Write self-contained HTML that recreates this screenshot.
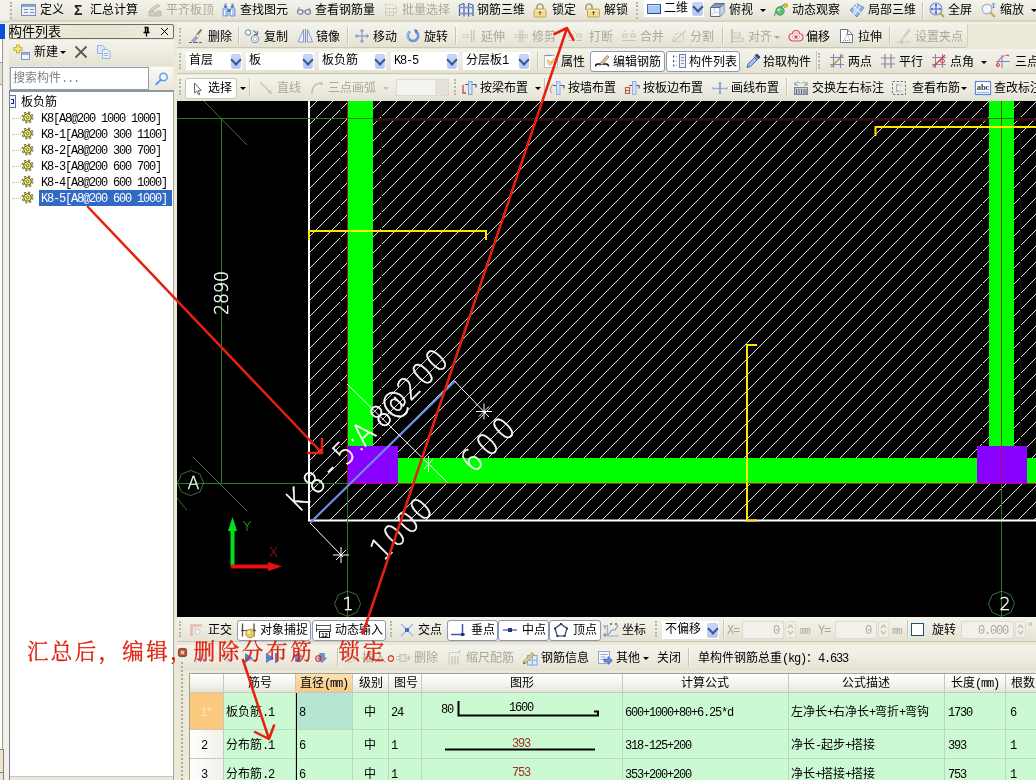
<!DOCTYPE html>
<html lang="zh-CN"><head><meta charset="utf-8"><title>构件列表 - 板负筋</title>
<style>
*{box-sizing:border-box;margin:0;padding:0}
html,body{width:1036px;height:780px;overflow:hidden}
body{position:relative;background:#ece9d8;font:12px/14px "Liberation Sans","Noto Sans CJK SC",sans-serif;color:#000}
#app{position:absolute;left:0;top:0;width:1036px;height:780px;will-change:transform}
.a{position:absolute}
.t{position:absolute;white-space:nowrap;height:14px;line-height:14px;font-size:12px}
.m{font-family:"Liberation Mono","Noto Sans CJK SC",monospace;letter-spacing:-1.2px}
.g{color:#aca899}
.tb{position:absolute;background:linear-gradient(#f4f3ec,#eeede2 45%,#e4e2d2)}
.btn{position:absolute;background:#fff;border:1px solid #8a99b5;border-radius:3px}
.sep{position:absolute;width:1px;background:#c8c5b5;box-shadow:1px 0 0 rgba(255,255,255,.55)}
.grip{position:absolute;width:3px;border-left:2px dotted #b8b5a5}
.cb{position:absolute;background:#fff;height:18px}
.arr{position:absolute;background:linear-gradient(#c8d6fb,#b4c8f6);border:1px solid #c2d0f4;border-radius:2px}
.arr:after{content:"";position:absolute;left:.6px;top:.7px;width:6px;height:6px;border-right:2px solid #3b5591;border-bottom:2px solid #3b5591;transform:rotate(45deg)}
.dd{position:absolute;width:0;height:0;border-left:3px solid transparent;border-right:3px solid transparent;border-top:3px solid #000}
.ic{position:absolute;width:16px;height:16px;overflow:visible}
.cell{position:absolute;background:#cbfad2;border-right:1px solid #bcd6c2;border-bottom:1px solid #bcd6c2}
.hd{position:absolute;background:linear-gradient(#fff,#f3f2ec 60%,#e6e4d8);border-right:1px solid #c9c7ba;border-bottom:1px solid #c9c7ba}
</style></head>
<body>
<div id="app">
<div class="a" style="left:0px;top:0px;width:10px;height:780px;background:#f1f1ea;border-right:1px solid #d6d3dc"></div>
<div class="a" style="left:0px;top:20px;width:9px;height:3px;background:linear-gradient(#e4e2da,#d4d2c8)"></div>
<div class="a" style="left:0px;top:39px;width:3px;height:710px;background:#fff;border-right:1px solid #9c9a90"></div>
<div class="a" style="left:0px;top:24px;width:5px;height:15px;background:#0a4fd8"></div>
<div class="a" style="left:0px;top:62px;width:3px;height:23px;background:#e2e0d6;border:1px solid #9c9a90;border-left:0"></div>
<div class="a" style="left:0px;top:749px;width:4px;height:31px;background:#ece4d0;border-right:1px solid #85837a;border-top:1px solid #85837a"></div>
<div class="a" style="left:0px;top:772px;width:4px;height:1px;background:#85837a"></div>
<div class="tb" style="left:9px;top:0px;width:1027px;height:20px;"></div>
<div class="a" style="left:9px;top:19px;width:1027px;height:3px;background:linear-gradient(#e2dfd0,#d3d0c0)"></div>
<div class="a" style="left:9px;top:22px;width:1027px;height:2px;background:#f3f2ea"></div>
<div class="grip" style="left:10px;top:2px;width:3px;height:17px;"></div>
<svg class="ic" style="left:20px;top:2px;width:16px;height:16px;" viewBox="0 0 16 16"><rect x="1.5" y="2.5" width="14" height="11" fill="#e9eef8" stroke="#7b8fb8"/><rect x="2" y="3" width="13" height="2" fill="#8ea4d2"/><path d="M4 7.5h4M4 10.5h4M10 7.5h4M10 10.5h4" stroke="#7b8fb8"/></svg>
<div class="t " style="left:40px;top:3px;">定义</div>
<div class="t " style="left:74px;top:2px;font:bold 14px 'Liberation Sans',sans-serif;color:#222">Σ</div>
<div class="t " style="left:90px;top:3px;">汇总计算</div>
<svg class="ic" style="left:147px;top:2px;width:16px;height:16px;" viewBox="0 0 16 16"><path d="M3 7l8-5 2 2-8 5z" fill="#d4d2c6" stroke="#bdbaab" stroke-width=".8"/><path d="M2 9h5v2h3v-2h4v5h-12z" fill="#cfcdc0" stroke="#b5b2a3" stroke-width=".8"/></svg>
<div class="t g" style="left:166px;top:3px;">平齐板顶</div>
<svg class="ic" style="left:221px;top:2px;width:16px;height:16px;" viewBox="0 0 16 16"><path d="M3 4h3v2h-3zM10 4h3v2h-3z" fill="#4f6fb5"/><path d="M2 7c0-1 1-1.500 2.500-1.500s2.500.5 2.500 1.500v7h-5zM9 7c0-1 1-1.500 2.500-1.500s2.500.5 2.500 1.500v7h-5z" fill="#a9c5f2" stroke="#6f8fd0" stroke-width=".8"/><path d="M3.500 8v5M10.500 8v5" stroke="#fff" stroke-width="1.200"/><rect x="6.500" y="7" width="3" height="3" fill="#5a78b8"/><path d="M3.500 1.500h2v2.500h-2zM10.500 1.500h2v2.500h-2z" fill="#6f8fd0"/></svg>
<div class="t " style="left:240px;top:3px;">查找图元</div>
<svg class="ic" style="left:296px;top:2px;width:16px;height:16px;" viewBox="0 0 16 16"><ellipse cx="4.200" cy="10" rx="2.700" ry="2.300" fill="none" stroke="#7d88a4" stroke-width="1.300"/><ellipse cx="11.800" cy="10" rx="2.700" ry="2.300" fill="none" stroke="#7d88a4" stroke-width="1.300"/><path d="M1.500 9l2-4M14.500 9l-1.500-3M7 9.500q1-1 2 0" stroke="#7d88a4" fill="none"/></svg>
<div class="t " style="left:315px;top:3px;">查看钢筋量</div>
<svg class="ic" style="left:383px;top:2px;width:16px;height:16px;" viewBox="0 0 16 16"><path d="M2.500 2v12M2.500 2.500h8M2.500 6.500h11M2.500 10.500h11M2.500 13.500h8M6.500 6v8M10.500 6v8" stroke="#c9c6b8" fill="none" stroke-dasharray="2 1"/><path d="M12 3l2 5-2 5" fill="none" stroke="#cfccc0"/></svg>
<div class="t g" style="left:402px;top:3px;">批量选择</div>
<svg class="ic" style="left:458px;top:2px;width:16px;height:16px;" viewBox="0 0 16 16"><path d="M1.500 3v11M6 1.500v13M10.500 1.500v13M15 3v11" stroke="#3e5aa8" stroke-width="1.200"/><path d="M1 5.500h14.500M1 11.500h14.500" stroke="#6f8fd8" stroke-width="1.300"/><path d="M1.500 3l4.500-1.500M10.500 1.500l4.500 1.500" stroke="#3e5aa8"/></svg>
<div class="t " style="left:477px;top:3px;">钢筋三维</div>
<svg class="ic" style="left:532px;top:2px;width:16px;height:16px;" viewBox="0 0 16 16"><path d="M5 7.500v-2.500a3 3 0 0 1 6 0v2.500" fill="none" stroke="#a8a08a" stroke-width="1.700"/><rect x="2" y="7" width="12" height="8" rx="1.500" fill="#f3dc92" stroke="#c2a64c"/><path d="M3 8.500h10" stroke="#fbf0c4"/><path d="M8 9.500v3.500M6.800 11l1.200-1.500 1.200 1.500" stroke="#6a5a2a" stroke-width="1" fill="none"/></svg>
<div class="t " style="left:552px;top:3px;">锁定</div>
<svg class="ic" style="left:584px;top:2px;width:16px;height:16px;" viewBox="0 0 16 16"><path d="M2 8v-3a3 3 0 0 1 6 0v2.500" fill="none" stroke="#a8a08a" stroke-width="1.700"/><rect x="3.500" y="7" width="12" height="8" rx="1.500" fill="#f3dc92" stroke="#c2a64c"/><path d="M4.500 8.500h10" stroke="#fbf0c4"/><path d="M9.500 9.500v3.500M8.300 11l1.200-1.500 1.200 1.500" stroke="#6a5a2a" stroke-width="1" fill="none"/></svg>
<div class="t " style="left:604px;top:3px;">解锁</div>
<div class="grip" style="left:636px;top:2px;width:3px;height:17px;"></div>
<div class="cb" style="left:643.5px;top:0px;width:60px;height:16.5px;"></div>
<svg class="ic" style="left:646px;top:0px;width:16px;height:16px;" viewBox="0 0 16 16"><rect x="1.500" y="4.500" width="13" height="9" fill="#a9c4f6" stroke="#4a68b0"/><path d="M2 13.500h13M14.500 5v8.500" stroke="#2a4590"/><path d="M2.500 5.500h11" stroke="#cfe0fc"/></svg>
<div class="t " style="left:664px;top:1px;">二维</div>
<div class="arr" style="left:692.3px;top:1.5px;width:10.5px;height:14px;"></div>
<svg class="ic" style="left:709px;top:2px;width:16px;height:16px;" viewBox="0 0 16 16"><path d="M1.500 5.500l4-4h9.500v9l-4 4h-9.500z" fill="#f4f8fd" stroke="#5a6a88"/><path d="M1.500 5.500l4-4h9.500l-4 4z" fill="#7f9cc4" stroke="#5a6a88"/><path d="M11 5.500v9M11 5.500l4-4" fill="none" stroke="#5a6a88"/><path d="M11.500 6l3-3v7.500l-3 3z" fill="#c4d6ee"/><path d="M5.500 6v4.500M5.500 10.500l-3.500 3M5.500 10.500h5" stroke="#b8c8e0" stroke-width=".8" fill="none"/></svg>
<div class="t " style="left:729px;top:3px;">俯视</div>
<div class="dd" style="left:760px;top:9px;border-top-color:#000"></div>
<svg class="ic" style="left:773px;top:2px;width:16px;height:16px;" viewBox="0 0 16 16"><path d="M1.500 14c1-7 6-11 13-11" fill="none" stroke="#7f9ad0" stroke-width="1.400"/><circle cx="7" cy="9" r="4.200" fill="#5fc070" stroke="#2f8a45" stroke-width=".8"/><circle cx="5.800" cy="7.800" r="1.400" fill="#c8f0cc"/><circle cx="12.500" cy="3.500" r="2" fill="#f0c040" stroke="#a88420" stroke-width=".7"/></svg>
<div class="t " style="left:792px;top:3px;">动态观察</div>
<svg class="ic" style="left:849px;top:2px;width:16px;height:16px;" viewBox="0 0 16 16"><path d="M1 8l7-6.500 7 4-7 9.500z" fill="#8fb6ea" stroke="#5f80c0" stroke-width=".8"/><path d="M4.500 4.800l7 6M8 1.500l-3.500 10M11.500 3.500l-6 9" stroke="#eaf2fc" stroke-width="1.200" fill="none"/></svg>
<div class="t " style="left:868px;top:3px;">局部三维</div>
<div class="sep" style="left:922px;top:2px;width:1px;height:17px;"></div>
<svg class="ic" style="left:929px;top:2px;width:16px;height:16px;" viewBox="0 0 16 16"><circle cx="7" cy="7" r="6" fill="#e6eefb" stroke="#7f97c8" stroke-width="1.200"/><path d="M7 2.500v9M2.500 7h9" stroke="#4a6ab8" stroke-width="1.200"/><path d="M7 1.500l-1.800 2.300h3.600zM7 12.500l-1.800-2.300h3.600zM1.500 7l2.300-1.800v3.600zM12.500 7l-2.300-1.800v3.600z" fill="#4a6ab8"/><path d="M11.500 11.500l3.500 3.500" stroke="#c8a048" stroke-width="2"/></svg>
<div class="t " style="left:948px;top:3px;">全屏</div>
<svg class="ic" style="left:981px;top:2px;width:16px;height:16px;" viewBox="0 0 16 16"><circle cx="6" cy="7" r="4.800" fill="#f2f7fd" stroke="#a9b6cc" stroke-width="1.500"/><path d="M9.500 10.500l4.500 4.500" stroke="#d0a850" stroke-width="2.200"/><path d="M12.500 1v5M11 2.500l1.500-1.500 1.500 1.500M11 4.500l1.500 1.500 1.500-1.500" stroke="#5f80c0" fill="none" stroke-width=".9"/></svg>
<div class="t " style="left:1000px;top:3px;">缩放</div>
<div class="dd" style="left:1031px;top:9px;border-top-color:#000"></div>
<div class="a" style="left:177px;top:24px;width:859px;height:77px;background:#ece9d8"></div>
<div class="tb" style="left:177px;top:23px;width:791px;height:25px;border-radius:0 3px 3px 0;border-bottom:1px solid #cbc8b8;border-right:1px solid #d5d2c2"></div>
<div class="grip" style="left:179px;top:28px;width:3px;height:16px;"></div>
<svg class="ic" style="left:188px;top:28px;width:16px;height:16px;" viewBox="0 0 16 16"><path d="M13.500 1.500l-5 6" stroke="#8a8458" stroke-width="2"/><path d="M9.500 6l-2 2.500 1.800 1.500 2-2.500z" fill="#f4f4f4" stroke="#999" stroke-width=".6"/><path d="M7.500 8.500l-4 4.500 3 .5 3-3.500z" fill="#b79ad8" stroke="#8a6ab0" stroke-width=".6"/><path d="M1 14.500h3M5 14.500h5M11 14.500h3" stroke="#666" stroke-width="1.200"/></svg>
<div class="t " style="left:208px;top:30px;">删除</div>
<div class="sep" style="left:238px;top:27px;width:1px;height:18px;"></div>
<svg class="ic" style="left:244px;top:28px;width:16px;height:16px;" viewBox="0 0 16 16"><circle cx="4" cy="4.500" r="2.600" fill="#fff" stroke="#8d9bb8" stroke-width="1.200"/><circle cx="11" cy="11" r="3.600" fill="#fff" stroke="#8d9bb8" stroke-width="1.200"/><circle cx="11" cy="11" r="1.800" fill="none" stroke="#b5c0d6"/><path d="M9.500 2.500l4 4M13.500 3v3.500h-3.500" fill="none" stroke="#6d7890" stroke-width="1.100"/></svg>
<div class="t " style="left:264px;top:30px;">复制</div>
<svg class="ic" style="left:297px;top:28px;width:16px;height:16px;" viewBox="0 0 16 16"><path d="M6.500 1.500v12.500h-5.500z" fill="#e8eefa" stroke="#8aa0cc"/><path d="M10.500 1.500v12.500h5z" fill="#e8eefa" stroke="#8aa0cc"/><path d="M8.500 1v14" stroke="#7f94c0" stroke-width="1.200"/></svg>
<div class="t " style="left:316px;top:30px;">镜像</div>
<div class="sep" style="left:347px;top:27px;width:1px;height:18px;"></div>
<svg class="ic" style="left:354px;top:28px;width:16px;height:16px;" viewBox="0 0 16 16"><path d="M8 2v12M2 8h12" stroke="#8fa4cc" stroke-width="1.300"/><path d="M8 .8l-2.200 2.700h4.400zM8 15.200l-2.200-2.700h4.400zM.8 8l2.700-2.200v4.400zM15.200 8l-2.700-2.200v4.400z" fill="#7f98c8"/></svg>
<div class="t " style="left:373px;top:30px;">移动</div>
<svg class="ic" style="left:405px;top:28px;width:16px;height:16px;" viewBox="0 0 16 16"><path d="M5 3.500a5.200 5.200 0 1 0 6 0" fill="none" stroke="#6f93e0" stroke-width="2.600"/><path d="M4 4.500a5.200 5.200 0 0 0 0 7" fill="none" stroke="#a9c2f2" stroke-width="1.200"/><path d="M9 1l4 1.500-2.500 3z" fill="#4f74c8"/></svg>
<div class="t " style="left:424px;top:30px;">旋转</div>
<div class="sep" style="left:455px;top:27px;width:1px;height:18px;"></div>
<svg class="ic" style="left:461px;top:28px;width:16px;height:16px;" viewBox="0 0 16 16"><path d="M1 7h3M5 7h3M1 9.500h3M5 9.500h3" stroke="#c9c6b8" stroke-width="1.200"/><path d="M10.500 2v12M13 2v12" stroke="#c9c6b8" stroke-width="1.300"/></svg>
<div class="t g" style="left:481px;top:30px;">延伸</div>
<svg class="ic" style="left:513px;top:28px;width:16px;height:16px;" viewBox="0 0 16 16"><path d="M1 7h14M1 9.500h14" stroke="#c9c6b8" stroke-width="1.100"/><path d="M7 2v12M9.500 2v12" stroke="#c9c6b8" stroke-width="1.300"/></svg>
<div class="t g" style="left:532px;top:30px;">修剪</div>
<svg class="ic" style="left:567px;top:28px;width:16px;height:16px;" viewBox="0 0 16 16"><path d="M2 6h4M10 6h4M2 6v3h4v-3M10 6v3h4v-3M1 12.500h5.500M9.500 12.500h5.500" stroke="#c9c6b8" fill="none" stroke-width="1.200"/><path d="M7 3l2 2" stroke="#c9c6b8"/></svg>
<div class="t g" style="left:589px;top:30px;">打断</div>
<svg class="ic" style="left:621px;top:28px;width:16px;height:16px;" viewBox="0 0 16 16"><path d="M2 6h4M10 6h4M2 6v3h4v-3M10 6v3h4v-3M1 12.500h14" stroke="#c9c6b8" fill="none" stroke-width="1.200"/><path d="M3 3h2M11 3h2" stroke="#c9c6b8"/></svg>
<div class="t g" style="left:640px;top:30px;">合并</div>
<svg class="ic" style="left:671px;top:28px;width:16px;height:16px;" viewBox="0 0 16 16"><path d="M1.500 13.500h11v-8h-8z" fill="none" stroke="#c9c6b8" stroke-width="1.100" stroke-dasharray="2 1"/><path d="M2 14l11-10" stroke="#c9c6b8" stroke-width="1.200"/><path d="M11 6l3.500-4 1 1-3.500 4z" fill="#d8d5c8"/></svg>
<div class="t g" style="left:690px;top:30px;">分割</div>
<div class="sep" style="left:722px;top:27px;width:1px;height:18px;"></div>
<svg class="ic" style="left:729px;top:28px;width:16px;height:16px;" viewBox="0 0 16 16"><path d="M3 1v14" stroke="#bfbcae" stroke-width="1.600"/><path d="M3 5h8v3h-8M3 10h11v3.500h-11" stroke="#c9c6b8" fill="none" stroke-width="1.200"/></svg>
<div class="t g" style="left:748px;top:30px;">对齐</div>
<div class="dd" style="left:774px;top:36px;border-top-color:#aca899"></div>
<svg class="ic" style="left:788px;top:28px;width:16px;height:16px;" viewBox="0 0 16 16"><path d="M8 2.500c2.200 0 3.500 1.500 3.500 3 2 .3 3.500 1.700 3.500 3.700 0 2.300-2 3.800-4.500 3.800h-5c-2.500 0-4.500-1.500-4.500-3.800 0-2 1.500-3.400 3.500-3.700 0-1.500 1.300-3 3.500-3z" fill="#fbe4e6" stroke="#c85060" stroke-width="1.100"/><path d="M8 5c1.200 0 1.800.9 1.800 1.800 1 .2 1.800.9 1.800 2 0 1.200-1 2-2.200 2h-2.800c-1.200 0-2.200-.8-2.200-2 0-1.100.8-1.800 1.800-2 0-.9.600-1.800 1.800-1.800z" fill="#fff" stroke="#d88a94" stroke-width=".8"/><rect x="6.500" y="7.500" width="3" height="2.500" fill="#d83a4a"/></svg>
<div class="t " style="left:806px;top:30px;">偏移</div>
<svg class="ic" style="left:839px;top:28px;width:16px;height:16px;" viewBox="0 0 16 16"><path d="M1.500 1.500h7l5 5v8h-12z" fill="#fff" stroke="#6a7590"/><path d="M8.500 1.500v5h5" fill="none" stroke="#6a7590"/><path d="M4 12.500h8M8 6l-3 6.500M8 6l3 6.500" stroke="#8a94aa" stroke-dasharray="1 1" fill="none"/></svg>
<div class="t " style="left:858px;top:30px;">拉伸</div>
<div class="sep" style="left:889px;top:27px;width:1px;height:18px;"></div>
<svg class="ic" style="left:896px;top:28px;width:16px;height:16px;" viewBox="0 0 16 16"><path d="M13.500 1.500l-6 8" stroke="#cfccbf" stroke-width="2.200"/><path d="M7.500 9.500l-2 3" stroke="#d8d5c8" stroke-width="2"/><path d="M1 14h4M6 14h3M10 14h4" stroke="#c5c2b4" stroke-width="1.200"/><rect x="4" y="12.500" width="3" height="3" fill="#c9c6b8"/></svg>
<div class="t g" style="left:915px;top:30px;">设置夹点</div>
<div class="tb" style="left:177px;top:49px;width:859px;height:25px;border-bottom:1px solid #cbc8b8"></div>
<div class="grip" style="left:179px;top:53px;width:3px;height:16px;"></div>
<div class="cb" style="left:186px;top:52px;width:56px;height:18px;"></div>
<div class="arr" style="left:230.5px;top:54px;width:10.5px;height:14.5px;"></div>
<div class="t " style="left:189px;top:53px;">首层</div>
<div class="cb" style="left:246px;top:52px;width:68px;height:18px;"></div>
<div class="arr" style="left:302.5px;top:54px;width:10.5px;height:14.5px;"></div>
<div class="t " style="left:249px;top:53px;">板</div>
<div class="cb" style="left:319px;top:52px;width:67px;height:18px;"></div>
<div class="arr" style="left:374.5px;top:54px;width:10.5px;height:14.5px;"></div>
<div class="t " style="left:322px;top:53px;">板负筋</div>
<div class="cb" style="left:391px;top:52px;width:67px;height:18px;"></div>
<div class="arr" style="left:446.5px;top:54px;width:10.5px;height:14.5px;"></div>
<div class="t " style="left:394px;top:53px;"><span class="m">K8-5</span></div>
<div class="cb" style="left:463px;top:52px;width:67px;height:18px;"></div>
<div class="arr" style="left:518.5px;top:54px;width:10.5px;height:14.5px;"></div>
<div class="t " style="left:466px;top:53px;">分层板<span class="m">1</span></div>
<div class="sep" style="left:537px;top:52px;width:1px;height:18px;"></div>
<svg class="ic" style="left:543px;top:53px;width:16px;height:16px;" viewBox="0 0 16 16"><path d="M1.500 2.500h10l3 3v9h-13z" fill="#fff" stroke="#b9bfcc"/><path d="M1.500 2.500h8" stroke="#8a8f9c" stroke-width="1.200"/><path d="M4 7l3.500 3 5-5" fill="none" stroke="#e6c860" stroke-width="2.400"/><path d="M4 10l3 2.500 4-4" fill="none" stroke="#c8b070" stroke-width="1"/></svg>
<div class="t " style="left:561px;top:55px;">属性</div>
<div class="btn" style="left:590px;top:51px;width:75px;height:21px;"></div>
<svg class="ic" style="left:594px;top:53px;width:16px;height:16px;" viewBox="0 0 16 16"><path d="M1.500 13.500c0-2 1-2.500 2.500-2.500h8c1.500 0 2.500.5 2.500 2.500" stroke="#111" fill="none" stroke-width="1.300"/><path d="M6 10.500l7-8 2 1.500-7 8z" fill="#d9c79a" stroke="#8f7d50" stroke-width=".7"/><path d="M6 10.500l-.5 2 2.300-.7z" fill="#444"/></svg>
<div class="t " style="left:613px;top:55px;">编辑钢筋</div>
<div class="btn" style="left:666px;top:51px;width:74px;height:21px;"></div>
<svg class="ic" style="left:671px;top:53px;width:16px;height:16px;" viewBox="0 0 16 16"><path d="M2 3.500h2M2 8h2M2 12.500h2" stroke="#3b4a78" stroke-width="1.800" stroke-dasharray="1.200 .8"/><path d="M5 3.500h2M5 8h2M5 12.500h2" stroke="#8a98b8" stroke-dasharray="1 1"/><rect x="8.500" y="1.500" width="6" height="13" fill="#eef3fb" stroke="#6f80a8"/><path d="M10 4.500h3M10 7.500h3M10 10.500h3" stroke="#8a98b8"/></svg>
<div class="t " style="left:689px;top:55px;">构件列表</div>
<svg class="ic" style="left:745px;top:53px;width:16px;height:16px;" viewBox="0 0 16 16"><path d="M2 14.500l1-3.500 6.500-6.500 2.500 2.500-6.500 6.500z" fill="#9cc0f0" stroke="#3f5f9a" stroke-width=".9"/><path d="M9 3.500l3.500 3.500M10 2.500l2-1.500 3 3-1.500 2z" fill="#34508c" stroke="#34508c"/></svg>
<div class="t " style="left:763px;top:55px;">拾取构件</div>
<div class="sep" style="left:816px;top:51px;width:1px;height:21px;"></div>
<div class="grip" style="left:818px;top:53px;width:3px;height:16px;"></div>
<svg class="ic" style="left:829px;top:53px;width:16px;height:16px;" viewBox="0 0 16 16"><path d="M1 4.500h14M1 11.500h14" stroke="#7d86c8" stroke-width="1.100"/><path d="M4.500 1v14M11.500 1v14" stroke="#9a7aa8" stroke-width="1.100"/><path d="M2 14l12-12" stroke="#9a9458" stroke-width="1.300"/></svg>
<div class="t " style="left:848px;top:55px;">两点</div>
<svg class="ic" style="left:880px;top:53px;width:16px;height:16px;" viewBox="0 0 16 16"><path d="M1 5h14M1 11h14" stroke="#7d86c8" stroke-width="1.200"/><path d="M5 1v14M11 1v14" stroke="#a87a8a" stroke-width="1.200"/></svg>
<div class="t " style="left:899px;top:55px;">平行</div>
<svg class="ic" style="left:931px;top:53px;width:16px;height:16px;" viewBox="0 0 16 16"><path d="M1 4.500h14M1 11.500h14" stroke="#7d86c8" stroke-width="1.100"/><path d="M4.500 1v14M11.500 1v14" stroke="#b07a8a" stroke-width="1.100"/><path d="M2 14l12-12" stroke="#d84050" stroke-width="1.200"/><circle cx="11.500" cy="8" r="2" fill="none" stroke="#d84050"/></svg>
<div class="t " style="left:950px;top:55px;">点角</div>
<div class="dd" style="left:981px;top:61px;border-top-color:#000"></div>
<svg class="ic" style="left:995px;top:53px;width:16px;height:16px;" viewBox="0 0 16 16"><path d="M2 14c0-7 5-12 12-12" fill="none" stroke="#e07080" stroke-width="1.200"/><path d="M7 2v13M1 8.500h14" stroke="#7d86c8" stroke-width="1.100"/><circle cx="3" cy="12" r="1.500" fill="none" stroke="#d84050"/><path d="M12 2l2 1" stroke="#d84050"/></svg>
<div class="t " style="left:1015px;top:55px;">三点</div>
<div class="tb" style="left:177px;top:75px;width:859px;height:26px;"></div>
<div class="grip" style="left:179px;top:79px;width:3px;height:16px;"></div>
<div class="btn" style="left:185px;top:77.5px;width:52px;height:21.5px;border-color:#c9c7ba"></div>
<svg class="ic" style="left:190px;top:80px;width:16px;height:16px;" viewBox="0 0 16 16"><path d="M4.500 3v10l2.300-2 1.700 3.800 1.400-.6-1.700-3.800h3z" fill="#fff" stroke="#555" stroke-width=".9"/></svg>
<div class="t " style="left:208px;top:81px;">选择</div>
<div class="dd" style="left:240px;top:87px;border-top-color:#000"></div>
<div class="sep" style="left:249px;top:78px;width:1px;height:18px;"></div>
<svg class="ic" style="left:258px;top:80px;width:16px;height:16px;" viewBox="0 0 16 16"><path d="M2 2l11 11" stroke="#c6c3b4" stroke-width="1.300"/><path d="M14 14l-4.500-1.200 3.300-3.300z" fill="#c6c3b4"/></svg>
<div class="t g" style="left:277px;top:81px;">直线</div>
<svg class="ic" style="left:309px;top:80px;width:16px;height:16px;" viewBox="0 0 16 16"><path d="M3 14c0-7 3-11 10-11" fill="none" stroke="#c6c3b4" stroke-width="1.600"/><circle cx="12.500" cy="3.500" r="1.500" fill="#c6c3b4"/></svg>
<div class="t g" style="left:328px;top:81px;">三点画弧</div>
<div class="dd" style="left:383px;top:87px;border-top-color:#c6c3b4"></div>
<div class="a" style="left:396px;top:79px;width:53px;height:17px;background:#f4f3ee;border:1px solid #dddbd0"></div>
<div class="a" style="left:435px;top:80px;width:13px;height:15px;background:#e4e2d8;border-radius:2px"></div>
<div class="grip" style="left:454px;top:79px;width:3px;height:16px;"></div>
<svg class="ic" style="left:461px;top:80px;width:16px;height:16px;" viewBox="0 0 16 16"><path d="M2 5v8h3" fill="none" stroke="#b85048" stroke-width="1.300"/><path d="M4 4.500h11v3" fill="none" stroke="#4a5a88" stroke-width="1.200"/><rect x="7.500" y="1.500" width="3.500" height="13" fill="#d2e2f8" stroke="#7fa0d8"/></svg>
<div class="t " style="left:480px;top:81px;">按梁布置</div>
<div class="dd" style="left:535px;top:87px;border-top-color:#000"></div>
<div class="sep" style="left:544px;top:78px;width:1px;height:18px;"></div>
<svg class="ic" style="left:549px;top:80px;width:16px;height:16px;" viewBox="0 0 16 16"><path d="M3 13.500c-2.500-3-2-7 1-9" stroke="#a9a0a8" fill="none" stroke-width="1.100"/><path d="M4 5.500h11v3" fill="none" stroke="#4a5a88" stroke-width="1.200"/><rect x="7.500" y="1.500" width="3.500" height="13" fill="#d2e2f8" stroke="#8fb0e0"/></svg>
<div class="t " style="left:568px;top:81px;">按墙布置</div>
<svg class="ic" style="left:624px;top:80px;width:16px;height:16px;" viewBox="0 0 16 16"><path d="M1.500 7.500h4v6h-4zM1.500 10.500h4" fill="none" stroke="#c05a48" stroke-width="1.200"/><path d="M5 5.500h10v3" fill="none" stroke="#4a5a88" stroke-width="1.200"/><rect x="8.500" y="1.500" width="3.500" height="13" fill="#d2e2f8" stroke="#8fb0e0"/></svg>
<div class="t " style="left:643px;top:81px;">按板边布置</div>
<svg class="ic" style="left:712px;top:80px;width:16px;height:16px;" viewBox="0 0 16 16"><path d="M1 8.500h14" stroke="#8fb0e0" stroke-width="1.300"/><path d="M8 2v12" stroke="#6a80b0" stroke-width="1.200"/><path d="M1 7l-0 3M15 7v3M6 3.500h4M6 13.500h4" stroke="#8fb0e0"/></svg>
<div class="t " style="left:731px;top:81px;">画线布置</div>
<div class="sep" style="left:786px;top:78px;width:1px;height:18px;"></div>
<svg class="ic" style="left:793px;top:80px;width:16px;height:16px;" viewBox="0 0 16 16"><rect x="1.500" y="7.500" width="13" height="7" fill="#c9ccd6" stroke="#7d8494"/><path d="M3.500 9v5M6 9v5M8.500 9v5M11 9v5M13 9v5" stroke="#5f6678"/><path d="M2 4.500c2-3 4-3 5-1M14 4.500c-2-3-4-3-5-1" fill="none" stroke="#8a90a0"/><path d="M2 2v3h3M14 2v3h-3" fill="none" stroke="#8a90a0"/></svg>
<div class="t " style="left:812px;top:81px;">交换左右标注</div>
<svg class="ic" style="left:891px;top:80px;width:16px;height:16px;" viewBox="0 0 16 16"><rect x="1.500" y="1.500" width="13" height="13" fill="none" stroke="#777c8a" stroke-dasharray="2.500 1.500"/><path d="M5.500 4v8M5.500 5h5M5.500 11h5" stroke="#aab" fill="none"/></svg>
<div class="t " style="left:912px;top:81px;">查看布筋</div>
<div class="dd" style="left:961px;top:87px;border-top-color:#000"></div>
<svg class="ic" style="left:975px;top:80px;width:16px;height:16px;" viewBox="0 0 16 16"><rect x=".5" y="1.500" width="15" height="13" fill="#fff" stroke="#5f86d0" stroke-width="1.200"/><path d="M2 12.500h12" stroke="#9cc0f0" stroke-width="1.500"/><text x="8" y="10" font-size="8.500" text-anchor="middle" font-family="Liberation Serif,serif" font-weight="bold" fill="#334">abc</text></svg>
<div class="t " style="left:994px;top:81px;">查改标注</div>
<div class="a" style="left:10px;top:24px;width:167px;height:756px;background:#ece9d8"></div>
<div class="a" style="left:9px;top:24px;width:165px;height:15px;background:linear-gradient(100deg,#ecebdc,#e6e4d2 60%,#efeee2);border:1px solid #6f6d60;border-radius:2px"></div>
<div class="t " style="left:9px;top:24.5px;font-size:13px">构件列表</div>
<svg class="a" style="left:140px;top:25px;width:32px;height:13px" viewBox="0 0 32 13"><path d="M4.500 2.500h4M5.500 2.500v5M7.500 2.500v5M8 3v4.500M3.500 7.500h6M6.500 7.500v4" stroke="#000" fill="none" stroke-width="1.300"/><path d="M21 3l7 7M28 3l-7 7" stroke="#000"/></svg>
<div class="tb" style="left:9px;top:40px;width:165px;height:26px;"></div>
<svg class="ic" style="left:13px;top:44px;width:16px;height:16px;" viewBox="0 0 16 16"><path d="M3.500 1h3v2.500h2.500v3h-2.500v2.500h-3v-2.500h-2.500v-3h2.500z" fill="#f6e67e" stroke="#c2a838" stroke-width=".9"/><rect x="8.500" y="8.500" width="8" height="7" fill="#f2f6fd" stroke="#7f94c8"/><rect x="9" y="9" width="7" height="2" fill="#9ab0e0"/></svg>
<div class="t " style="left:34px;top:45px;">新建</div>
<div class="dd" style="left:60px;top:51px;border-top-color:#000"></div>
<svg class="ic" style="left:73px;top:44px;width:16px;height:16px;" viewBox="0 0 16 16"><path d="M2.500 2.500l11 11M13.500 2.500l-11 11" stroke="#5a5a5a" stroke-width="1.800"/></svg>
<svg class="ic" style="left:96px;top:44px;width:16px;height:16px;" viewBox="0 0 16 16"><path d="M1.500 1.500h5l2 2v6h-7z" fill="#dce8fb" stroke="#9ab4e0"/><path d="M6.500 5.500h5l2.500 2.500v6.500h-7.500z" fill="#e8f0fd" stroke="#9ab4e0"/><path d="M8 9.500h4M8 11.500h4" stroke="#9ab4e0"/></svg>
<div class="a" style="left:10px;top:67px;width:139px;height:23px;background:#fff;border:1px solid #8e9cb0"></div>
<div class="t " style="left:13px;top:71px;color:#808080">搜索构件<span class="m">...</span></div>
<div class="a" style="left:149px;top:67px;width:24px;height:24px;background:linear-gradient(#fafaf6,#e9e7da)"></div>
<svg class="ic" style="left:153px;top:70px;width:16px;height:16px;" viewBox="0 0 16 16"><circle cx="10.500" cy="7" r="3.700" fill="#f2f8ff" stroke="#5fa0ea" stroke-width="1.500"/><path d="M7.800 9.800l-4.600 4.400" stroke="#5f9ae8" stroke-width="2" stroke-linecap="round"/></svg>
<div class="a" style="left:9px;top:90px;width:165px;height:690px;background:#fff;border-left:1px solid #7a7f8a;border-right:1px solid #a8a89c;border-top:2px solid #8a9a9c"></div>
<div class="a" style="left:10px;top:95px;width:6px;height:13px;background:#eef3fb;border:1px solid #5a74b0;border-left:0"></div>
<div class="a" style="left:11px;top:99px;width:3px;height:1px;background:#1a2a6a"></div>
<div class="a" style="left:11px;top:103px;width:3px;height:1px;background:#1a2a6a"></div>
<div class="a" style="left:13px;top:99px;width:1px;height:5px;background:#1a2a6a"></div>
<div class="t " style="left:21px;top:95px;">板负筋</div>
<div class="a" style="left:12px;top:118px;width:9px;height:1px;border-top:1px dotted #b5b5b5"></div>
<svg class="ic" style="left:21px;top:111px;width:13px;height:13px;" viewBox="0 0 16 16"><circle cx="8" cy="8" r="5.700" fill="none" stroke="#4e4c14" stroke-dasharray="2.200 2.280" stroke-width="3.200"/><circle cx="8" cy="8" r="5.700" fill="none" stroke="#efe65a" stroke-dasharray="1.200 3.280" stroke-dashoffset="-.5" stroke-width="1.800"/><circle cx="8" cy="8" r="4.600" fill="#f2ea62" stroke="#4e4c14" stroke-width="1"/><circle cx="8" cy="8" r="1.700" fill="#fffde0" stroke="#4e4c14" stroke-width="1"/></svg>
<div class="t " style="left:41px;top:111px;"><span class="m">K8[A8@200 1000 1000]</span></div>
<div class="a" style="left:12px;top:134px;width:9px;height:1px;border-top:1px dotted #b5b5b5"></div>
<svg class="ic" style="left:21px;top:127px;width:13px;height:13px;" viewBox="0 0 16 16"><circle cx="8" cy="8" r="5.700" fill="none" stroke="#4e4c14" stroke-dasharray="2.200 2.280" stroke-width="3.200"/><circle cx="8" cy="8" r="5.700" fill="none" stroke="#efe65a" stroke-dasharray="1.200 3.280" stroke-dashoffset="-.5" stroke-width="1.800"/><circle cx="8" cy="8" r="4.600" fill="#f2ea62" stroke="#4e4c14" stroke-width="1"/><circle cx="8" cy="8" r="1.700" fill="#fffde0" stroke="#4e4c14" stroke-width="1"/></svg>
<div class="t " style="left:41px;top:127px;"><span class="m">K8-1[A8@200 300 1100]</span></div>
<div class="a" style="left:12px;top:150px;width:9px;height:1px;border-top:1px dotted #b5b5b5"></div>
<svg class="ic" style="left:21px;top:143px;width:13px;height:13px;" viewBox="0 0 16 16"><circle cx="8" cy="8" r="5.700" fill="none" stroke="#4e4c14" stroke-dasharray="2.200 2.280" stroke-width="3.200"/><circle cx="8" cy="8" r="5.700" fill="none" stroke="#efe65a" stroke-dasharray="1.200 3.280" stroke-dashoffset="-.5" stroke-width="1.800"/><circle cx="8" cy="8" r="4.600" fill="#f2ea62" stroke="#4e4c14" stroke-width="1"/><circle cx="8" cy="8" r="1.700" fill="#fffde0" stroke="#4e4c14" stroke-width="1"/></svg>
<div class="t " style="left:41px;top:143px;"><span class="m">K8-2[A8@200 300 700]</span></div>
<div class="a" style="left:12px;top:166px;width:9px;height:1px;border-top:1px dotted #b5b5b5"></div>
<svg class="ic" style="left:21px;top:159px;width:13px;height:13px;" viewBox="0 0 16 16"><circle cx="8" cy="8" r="5.700" fill="none" stroke="#4e4c14" stroke-dasharray="2.200 2.280" stroke-width="3.200"/><circle cx="8" cy="8" r="5.700" fill="none" stroke="#efe65a" stroke-dasharray="1.200 3.280" stroke-dashoffset="-.5" stroke-width="1.800"/><circle cx="8" cy="8" r="4.600" fill="#f2ea62" stroke="#4e4c14" stroke-width="1"/><circle cx="8" cy="8" r="1.700" fill="#fffde0" stroke="#4e4c14" stroke-width="1"/></svg>
<div class="t " style="left:41px;top:159px;"><span class="m">K8-3[A8@200 600 700]</span></div>
<div class="a" style="left:12px;top:182px;width:9px;height:1px;border-top:1px dotted #b5b5b5"></div>
<svg class="ic" style="left:21px;top:175px;width:13px;height:13px;" viewBox="0 0 16 16"><circle cx="8" cy="8" r="5.700" fill="none" stroke="#4e4c14" stroke-dasharray="2.200 2.280" stroke-width="3.200"/><circle cx="8" cy="8" r="5.700" fill="none" stroke="#efe65a" stroke-dasharray="1.200 3.280" stroke-dashoffset="-.5" stroke-width="1.800"/><circle cx="8" cy="8" r="4.600" fill="#f2ea62" stroke="#4e4c14" stroke-width="1"/><circle cx="8" cy="8" r="1.700" fill="#fffde0" stroke="#4e4c14" stroke-width="1"/></svg>
<div class="t " style="left:41px;top:175px;"><span class="m">K8-4[A8@200 600 1000]</span></div>
<div class="a" style="left:12px;top:198px;width:9px;height:1px;border-top:1px dotted #b5b5b5"></div>
<svg class="ic" style="left:21px;top:191px;width:13px;height:13px;" viewBox="0 0 16 16"><circle cx="8" cy="8" r="5.700" fill="none" stroke="#4e4c14" stroke-dasharray="2.200 2.280" stroke-width="3.200"/><circle cx="8" cy="8" r="5.700" fill="none" stroke="#efe65a" stroke-dasharray="1.200 3.280" stroke-dashoffset="-.5" stroke-width="1.800"/><circle cx="8" cy="8" r="4.600" fill="#f2ea62" stroke="#4e4c14" stroke-width="1"/><circle cx="8" cy="8" r="1.700" fill="#fffde0" stroke="#4e4c14" stroke-width="1"/></svg>
<div class="a" style="left:39px;top:190px;width:133px;height:16px;background:#316ac5"></div>
<div class="t " style="left:41px;top:191px;color:#fff"><span class="m">K8-5[A8@200 600 1000]</span></div>
<div class="a" style="left:10px;top:776px;width:163px;height:4px;background:#e8e6da;border-top:1px solid #c9c7ba"></div>
<svg class="a" style="left:0;top:0;width:1036px;height:780px" viewBox="0 0 1036 780"><rect x="177" y="101" width="859" height="516" fill="#000"/><defs><pattern id="hat" patternUnits="userSpaceOnUse" x="0" y="2" width="16" height="16"><path d="M-1 1L1 -1M-1 17L17 -1M15 17L17 15" stroke="#dcdcdc" stroke-width="1" fill="none" shape-rendering="crispEdges"/></pattern><clipPath id="cvclip"><rect x="177" y="101" width="859" height="516"/></clipPath></defs><g clip-path="url(#cvclip)"><rect x="310" y="101" width="726" height="420" fill="url(#hat)"/><path d="M373 119.500H1036" stroke="#3a1010" stroke-width="2.500"/><path d="M340.500 101V446M381.500 101V446M982.500 101V446M1020.500 101V446" stroke="#240a0a" stroke-width="1"/><path d="M347.500 101V483" stroke="#a01800" stroke-width="1"/><rect x="348" y="101" width="25" height="357" fill="#00ff00"/><rect x="348" y="458" width="688" height="25" fill="#00ff00"/><rect x="989" y="101" width="25" height="357" fill="#00ff00"/><path d="M348 483.500H1036" stroke="#b03000" stroke-width="1"/><path d="M1001.500 101V458" stroke="#6a4a10" stroke-width="1"/><path d="M1001.500 483V617" stroke="#287a28" stroke-width="1"/><path d="M348 118.500H373M989 118.500H1014" stroke="#1f7a1f" stroke-width="1"/><rect x="348" y="446" width="50" height="37" fill="#8800ff"/><rect x="977" y="446" width="50" height="37" fill="#8800ff"/><path d="M348 483.500H398M977 483.500H1027M1001.500 446V483" stroke="#c00070" stroke-width="1"/><path d="M309 101V521M308 520.500H1036" stroke="#fff" stroke-width="2" fill="none"/><g stroke="#287a28" stroke-width="1" fill="none"><path d="M177 118.500H373"/><path d="M221.500 118V483"/><path d="M177 483.500H348"/><path d="M347.500 483V617"/><path d="M204 101L247 145" stroke="#357a35"/><path d="M193 457L247 511" stroke="#357a35"/><path d="M177 498C181 503 184 507 187 510" stroke="#357a35"/></g><polygon points="190.7,470.4 199.9,474.1 203.7,483.0 199.9,491.9 190.7,495.6 181.5,491.9 177.7,483.0 181.5,474.1" fill="none" stroke="#3a703a" stroke-width="1"/><text x="193.4" y="489.3" font-family="DejaVu Sans,Liberation Sans,sans-serif" font-weight="200" font-size="17.500" fill="#fff" stroke="#fff" stroke-width=".35" text-anchor="middle">A</text><polygon points="347.6,591.1 356.8,594.8 360.6,603.7 356.8,612.6 347.6,616.3 338.4,612.6 334.6,603.7 338.4,594.8" fill="none" stroke="#3a703a" stroke-width="1"/><text x="348" y="610" font-family="DejaVu Sans,Liberation Sans,sans-serif" font-weight="200" font-size="17.500" fill="#fff" stroke="#fff" stroke-width=".35" text-anchor="middle">1</text><polygon points="1001.5,591.1 1010.7,594.8 1014.5,603.7 1010.7,612.6 1001.5,616.3 992.3,612.6 988.5,603.7 992.3,594.8" fill="none" stroke="#3a703a" stroke-width="1"/><text x="1005" y="610" font-family="DejaVu Sans,Liberation Sans,sans-serif" font-weight="200" font-size="17.500" fill="#fff" stroke="#fff" stroke-width=".35" text-anchor="middle">2</text><text transform="translate(227.500 315) rotate(-90)" font-family="DejaVu Sans,Liberation Sans,sans-serif" font-weight="200" font-size="19.500" fill="#fff" stroke="#fff" stroke-width=".4" textLength="44" lengthAdjust="spacingAndGlyphs">2890</text><g stroke="#ffe800" stroke-width="2" fill="none"><path d="M309 240V231H486V240"/><path d="M875.500 136V127H1036"/><path d="M757 345H747V520.500H757"/></g><path d="M310.500 522.500L455 381" stroke="#6a8fe0" stroke-width="2.200"/><g stroke="#fff" stroke-width="1" fill="none"><path d="M347 384L447.500 482.500"/><path d="M310 523L343 557"/><path d="M454.500 381L489 417"/><path d="M333 555L349 555M341 547V563M336 560L346 550"/><path d="M476 411.500L492 411.500M484 403.500V419.500M479 416.500L489 406.500"/><path d="M428.500 456V472M424 469L433 459"/></g><g font-family="DejaVu Sans,Liberation Sans,sans-serif" font-weight="200" fill="#fff" stroke="#fff" stroke-width=".45" font-size="31" text-anchor="middle"><text transform="translate(406.100 406.100) rotate(-45) scale(.85 1)" x="-168.8 -139.9 -115.6 -90.5 -72.9 -58.2 -29.6 -7.6 17.1 40.9 63.4">K8-5:A8@200</text><text transform="translate(473.700 473.700) rotate(-45) scale(.85 1)" x="9.5 35.9 62.2">600</text><text transform="translate(472.700 472.700) rotate(-45) scale(.85 1)" x="-139.3 -117.3 -95.3 -73.3">1000</text></g><path d="M232.500 566V528" stroke="#00e020" stroke-width="4"/><path d="M232.500 517L237 531H228z" fill="#00e020"/><path d="M231 566.500H270" stroke="#e81010" stroke-width="4"/><path d="M282 566.500L268 562V571z" fill="#e81010"/><text x="247" y="531" font-family="DejaVu Sans,Liberation Sans,sans-serif" font-weight="200" font-size="14" fill="#30c030" text-anchor="middle">Y</text><text x="273.500" y="556.500" font-family="DejaVu Sans,Liberation Sans,sans-serif" font-weight="200" font-size="14" fill="#b01c1c" text-anchor="middle">X</text></g></svg>
<div class="tb" style="left:177px;top:617px;width:859px;height:25px;border-bottom:1px solid #cbc8b8"></div>
<div class="grip" style="left:179px;top:621px;width:3px;height:16px;"></div>
<svg class="ic" style="left:188px;top:622px;width:16px;height:16px;" viewBox="0 0 16 16"><path d="M3.500 14v-10.500h10.500" fill="none" stroke="#ecb8b2" stroke-width="2.600"/><path d="M6 6l6 6" stroke="#d4d4dc" stroke-width="1.600"/><circle cx="9.500" cy="9.500" r="2.600" fill="#f0f2fa" stroke="#c8ccdc"/></svg>
<div class="t " style="left:208px;top:623px;">正交</div>
<div class="btn" style="left:237px;top:620px;width:74px;height:21px;"></div>
<svg class="ic" style="left:241px;top:622px;width:16px;height:16px;" viewBox="0 0 16 16"><path d="M0 8.500h15" stroke="#5a4a40" stroke-width="1.100"/><path d="M1.500 1.500v13M13 1.500v13" stroke="#5a4a40" stroke-width="1.300"/><path d="M0 8.500l1.500-1.500 1.500 1.500-1.500 1.500zM11.500 8.500l1.500-1.500 1.500 1.500-1.500 1.500z" fill="#5a4a40"/><circle cx="9" cy="11.500" r="4.300" fill="#e6cc5e" stroke="#a08a38" stroke-width=".8"/><circle cx="7.800" cy="10.300" r="1.400" fill="#f8ecb0"/></svg>
<div class="t " style="left:260px;top:623px;">对象捕捉</div>
<div class="btn" style="left:312px;top:620px;width:74px;height:21px;"></div>
<svg class="ic" style="left:316px;top:622px;width:16px;height:16px;" viewBox="0 0 16 16"><path d="M0 3.500h15M0 7.500h15" stroke="#555" fill="none"/><path d="M.5 2v8M14.500 2v8" stroke="#555" fill="none"/><rect x="3.500" y="9.500" width="10" height="6" fill="#fff" stroke="#222"/><text x="8.500" y="14.800" font-size="6" text-anchor="middle" font-family="Liberation Sans,sans-serif" font-weight="bold" fill="#000">12</text></svg>
<div class="t " style="left:335px;top:623px;">动态输入</div>
<div class="grip" style="left:390px;top:621px;width:3px;height:16px;"></div>
<svg class="ic" style="left:399px;top:622px;width:16px;height:16px;" viewBox="0 0 16 16"><path d="M2 2l12 12M14 2l-12 12" stroke="#9ab8ec" stroke-width="1.300"/><rect x="6" y="6" width="4" height="4" fill="#4a6ec8"/></svg>
<div class="t " style="left:418px;top:623px;">交点</div>
<div class="btn" style="left:447px;top:620px;width:51px;height:21px;"></div>
<svg class="ic" style="left:450px;top:622px;width:16px;height:16px;" viewBox="0 0 16 16"><path d="M1 12.500h14" stroke="#3a5aa8" stroke-width="1.500"/><path d="M12.500 2v12" stroke="#3a5aa8" stroke-width="1.500"/><rect x="11" y="11" width="3" height="3" fill="#1f3a80"/></svg>
<div class="t " style="left:471px;top:623px;">垂点</div>
<div class="btn" style="left:498px;top:620px;width:51px;height:21px;"></div>
<svg class="ic" style="left:502px;top:622px;width:16px;height:16px;" viewBox="0 0 16 16"><path d="M1 8h14" stroke="#4a6ab8" stroke-width="1.400"/><rect x="6" y="6" width="4" height="4" fill="#1f3a80"/></svg>
<div class="t " style="left:522px;top:623px;">中点</div>
<div class="btn" style="left:549px;top:620px;width:52px;height:21px;"></div>
<svg class="ic" style="left:553px;top:622px;width:16px;height:16px;" viewBox="0 0 16 16"><path d="M8 2l6 4.500-2.300 7.500h-7.400l-2.300-7.500z" fill="#fff" stroke="#2a3a5a" stroke-width="1.200"/><path d="M7 1h2v2h-2zM13 5.500h2v2h-2zM1 5.500h2v2h-2zM3.500 13h2v2h-2zM10.500 13h2v2h-2z" fill="#2a3a5a"/></svg>
<div class="t " style="left:573px;top:623px;">顶点</div>
<svg class="ic" style="left:603px;top:622px;width:16px;height:16px;" viewBox="0 0 16 16"><path d="M4.500 3v11h11" stroke="#8fb0e0" fill="none" stroke-width="1.200"/><path d="M5 13l4-5h3l3-5" fill="none" stroke="#6f94d8" stroke-width="1.100"/><path d="M7 1l2 2M9 1l-2 2M12 1l2 2M14 1l-2 2" stroke="#666" stroke-width=".8"/><text x="0" y="7" font-size="6" font-family="Liberation Sans,sans-serif" fill="#555">Y</text><circle cx="2" cy="13" r="1.200" fill="none" stroke="#555" stroke-width=".7"/></svg>
<div class="t " style="left:622px;top:623px;">坐标</div>
<div class="grip" style="left:655px;top:621px;width:3px;height:16px;"></div>
<div class="cb" style="left:662px;top:621px;width:57px;height:18px;"></div>
<div class="t " style="left:665px;top:622px;">不偏移</div>
<div class="arr" style="left:707px;top:623px;width:10.5px;height:14.5px;"></div>
<div class="sep" style="left:723px;top:620px;width:1px;height:18px;"></div>
<div class="t g" style="left:727px;top:623px;"><span class="m">X=</span></div>
<div class="a" style="left:742px;top:621px;width:42px;height:18px;background:#f1f0ea;border:1px solid #dcdacd"></div>
<div class="t g" style="left:773px;top:623px;"><span class="m">0</span></div>
<div class="a" style="left:785px;top:621px;width:11px;height:17px;background:#f0efe8;border:1px solid #e0ded2;border-radius:2px"></div>
<svg class="a" style="left:785px;top:621px;width:11px;height:17px" viewBox="0 0 11 17"><path d="M3 7l2.500-3 2.500 3M3 10l2.500 3 2.500-3" fill="none" stroke="#c2c0b2" stroke-width="1.200"/></svg>
<div class="t g" style="left:800px;top:624px;font-size:10px"><span class="m">mm</span></div>
<div class="t g" style="left:818px;top:623px;"><span class="m">Y=</span></div>
<div class="a" style="left:835px;top:621px;width:42px;height:18px;background:#f1f0ea;border:1px solid #dcdacd"></div>
<div class="t g" style="left:865px;top:623px;"><span class="m">0</span></div>
<div class="a" style="left:878px;top:621px;width:11px;height:17px;background:#f0efe8;border:1px solid #e0ded2;border-radius:2px"></div>
<svg class="a" style="left:878px;top:621px;width:11px;height:17px" viewBox="0 0 11 17"><path d="M3 7l2.500-3 2.500 3M3 10l2.500 3 2.500-3" fill="none" stroke="#c2c0b2" stroke-width="1.200"/></svg>
<div class="t g" style="left:892px;top:624px;font-size:10px"><span class="m">mm</span></div>
<div class="sep" style="left:907px;top:620px;width:1px;height:18px;"></div>
<div class="a" style="left:911px;top:623px;width:13px;height:13px;background:#fff;border:1px solid #1c5180"></div>
<div class="t " style="left:932px;top:623px;">旋转</div>
<div class="a" style="left:961px;top:621px;width:53px;height:18px;background:#f1f0ea;border:1px solid #dcdacd"></div>
<div class="t g" style="left:978px;top:623px;"><span class="m">0.000</span></div>
<div class="a" style="left:1015px;top:621px;width:11px;height:17px;background:#f0efe8;border:1px solid #e0ded2;border-radius:2px"></div>
<svg class="a" style="left:1015px;top:621px;width:11px;height:17px" viewBox="0 0 11 17"><path d="M3 7l2.500-3 2.500 3M3 10l2.500 3 2.500-3" fill="none" stroke="#c2c0b2" stroke-width="1.200"/></svg>
<div class="t g" style="left:1028px;top:620px;">°</div>
<div class="a" style="left:177px;top:642px;width:859px;height:138px;background:#ece9d8"></div>
<div class="tb" style="left:177px;top:645px;width:859px;height:26px;"></div>
<svg class="ic" style="left:178px;top:648px;width:9px;height:9px;" viewBox="0 0 10 10"><rect x=".5" y=".5" width="9" height="9" rx="2" fill="#b8492f" stroke="#8a3a22"/><path d="M3 3l4 4M7 3l-4 4" stroke="#f4d8c8" stroke-width="1.400"/></svg>
<div class="a" style="left:181px;top:662px;width:3px;height:118px;border-left:2px dotted #b0ad9c"></div>
<svg class="ic" style="left:193px;top:650px;width:16px;height:16px;opacity:0.6;" viewBox="0 0 16 16"><path d="M12 3v10l-8-5z" fill="#b9c9ea"/><path d="M3 3v10" stroke="#b9c9ea" stroke-width="2"/></svg>
<svg class="ic" style="left:217px;top:650px;width:16px;height:16px;opacity:0.6;" viewBox="0 0 16 16"><path d="M12 3v10l-8-5z" fill="#b9c9ea"/></svg>
<svg class="ic" style="left:241px;top:650px;width:16px;height:16px;" viewBox="0 0 16 16"><path d="M4 3v10l8-5z" fill="#4f86d9"/></svg>
<svg class="ic" style="left:263px;top:650px;width:16px;height:16px;" viewBox="0 0 16 16"><path d="M3 3v10l8-5z" fill="#4f86d9"/><path d="M13 3v10" stroke="#4f86d9" stroke-width="2"/></svg>
<svg class="ic" style="left:292px;top:651px;width:12px;height:12px;" viewBox="0 0 16 16"><path d="M5 14h6v-6h3l-6-6-6 6h3z" fill="#6f94d8" stroke="#3d5fa5" stroke-width=".8"/></svg>
<svg class="ic" style="left:316px;top:652px;width:12px;height:12px;" viewBox="0 0 16 16"><path d="M5 2h6v6h3l-6 6-6-6h3z" fill="#6f94d8" stroke="#3d5fa5" stroke-width=".8"/></svg>
<div class="sep" style="left:337px;top:648px;width:1px;height:18px;"></div>
<svg class="ic" style="left:343px;top:650px;width:16px;height:16px;" viewBox="0 0 16 16"><path d="M2 4h7M2 8h7M2 12h7M11 5v6M9 8h5" stroke="#c6c3b4" fill="none" stroke-width="1.200"/></svg>
<div class="t g" style="left:362px;top:651px;">插入</div>
<svg class="ic" style="left:395px;top:650px;width:16px;height:16px;" viewBox="0 0 16 16"><rect x="5" y="4.500" width="6" height="7" fill="#e4e2d8" stroke="#c5c2b4"/><path d="M1 6.500h4M1 9.500h4M11 8h4M13 6l2 2-2 2" stroke="#c5c2b4" fill="none" stroke-width="1.100"/></svg>
<div class="t g" style="left:414px;top:651px;">删除</div>
<svg class="ic" style="left:447px;top:650px;width:16px;height:16px;" viewBox="0 0 16 16"><path d="M2 14.500v-12h11" stroke="#c5c2b4" fill="none" stroke-dasharray="2 1" stroke-width="1.200"/><path d="M5 6v8.500M8 6v8.500M11 6v8.500" stroke="#c9c6b8" stroke-width="1.300"/><path d="M11 2.500l3-2" stroke="#c5c2b4"/></svg>
<div class="t g" style="left:466px;top:651px;">缩尺配筋</div>
<svg class="ic" style="left:522px;top:650px;width:16px;height:16px;" viewBox="0 0 16 16"><rect x="5.500" y="5.500" width="9.500" height="9.500" fill="#dfeafb" stroke="#8aa4d8"/><path d="M10.200 5.500v9.500M5.500 10.200h9.500" stroke="#8aa4d8"/><path d="M1.500 11.500l8.500-9 2 1.800-8.500 9z" fill="#e8d088" stroke="#9a8448" stroke-width=".8"/><path d="M1.500 11.500l-.5 2.800 2.500-.9z" fill="#555"/></svg>
<div class="t " style="left:541px;top:651px;">钢筋信息</div>
<svg class="ic" style="left:597px;top:650px;width:16px;height:16px;" viewBox="0 0 16 16"><rect x="1.500" y="1.500" width="11" height="12" fill="#f4f7fd" stroke="#9aa8c8"/><path d="M3.500 4.500h7M3.500 7h5M3.500 9.500h4" stroke="#9aa8c8"/><path d="M7 9h4v-2.500l4.500 4-4.500 4v-2.500h-4z" fill="#5f8ee0" stroke="#3a62b8" stroke-width=".7"/></svg>
<div class="t " style="left:616px;top:651px;">其他</div>
<div class="dd" style="left:643px;top:657px;border-top-color:#000"></div>
<div class="t " style="left:657px;top:651px;">关闭</div>
<div class="sep" style="left:688px;top:648px;width:1px;height:18px;"></div>
<div class="t " style="left:698px;top:651px;">单构件钢筋总重<span class="m">(kg)</span>：<span class="m">4.633</span></div>
<div class="a" style="left:189px;top:673px;width:847px;height:107px;background:#fff;border-left:1px solid #a0a090;border-top:1px solid #a0a090"></div>
<div class="hd" style="left:190px;top:674px;width:34px;height:19px;"></div>
<div class="hd" style="left:224px;top:674px;width:72px;height:19px;"></div>
<div class="t " style="left:248px;top:676px;">筋号</div>
<div class="hd" style="left:296px;top:674px;width:57px;height:19px;background:linear-gradient(#fbe3b5,#f7c982)"></div>
<div class="t " style="left:300px;top:676px;">直径<span class="m">(mm)</span></div>
<div class="hd" style="left:353px;top:674px;width:36px;height:19px;"></div>
<div class="t " style="left:359px;top:676px;">级别</div>
<div class="hd" style="left:389px;top:674px;width:33px;height:19px;"></div>
<div class="t " style="left:394px;top:676px;">图号</div>
<div class="hd" style="left:422px;top:674px;width:201px;height:19px;"></div>
<div class="t " style="left:510px;top:676px;">图形</div>
<div class="hd" style="left:623px;top:674px;width:166px;height:19px;"></div>
<div class="t " style="left:681px;top:676px;">计算公式</div>
<div class="hd" style="left:789px;top:674px;width:156px;height:19px;"></div>
<div class="t " style="left:842px;top:676px;">公式描述</div>
<div class="hd" style="left:945px;top:674px;width:61px;height:19px;"></div>
<div class="t " style="left:951px;top:676px;">长度<span class="m">(mm)</span></div>
<div class="hd" style="left:1006px;top:674px;width:54px;height:19px;"></div>
<div class="t " style="left:1011px;top:676px;">根数</div>
<div class="a" style="left:190px;top:693px;width:34px;height:37px;background:#fbc97e;border-right:1px solid #c9c7ba;border-bottom:1px solid #c9c7ba"></div>
<div class="t " style="left:200px;top:705px;color:#fde7c4"><span class="m">1*</span></div>
<div class="cell" style="left:224px;top:693px;width:72px;height:37px;"></div>
<div class="cell" style="left:296px;top:693px;width:57px;height:37px;background:#b4e6d2"></div>
<div class="cell" style="left:353px;top:693px;width:36px;height:37px;"></div>
<div class="cell" style="left:389px;top:693px;width:33px;height:37px;"></div>
<div class="cell" style="left:422px;top:693px;width:201px;height:37px;"></div>
<div class="cell" style="left:623px;top:693px;width:166px;height:37px;"></div>
<div class="cell" style="left:789px;top:693px;width:156px;height:37px;"></div>
<div class="cell" style="left:945px;top:693px;width:61px;height:37px;"></div>
<div class="cell" style="left:1006px;top:693px;width:54px;height:37px;"></div>
<div class="t " style="left:226px;top:705px;">板负筋<span class="m">.1</span></div>
<div class="t " style="left:299px;top:705px;"><span class="m">8</span></div>
<div class="t " style="left:364px;top:705px;font-family:'Liberation Sans','Noto Sans CJK SC',sans-serif">中</div>
<div class="t " style="left:391px;top:705px;"><span class="m">24</span></div>
<div class="t " style="left:625px;top:705px;"><span class="m">600+1000+80+6.25*d</span></div>
<div class="t " style="left:791px;top:705px;">左净长<span class="m">+</span>右净长<span class="m">+</span>弯折<span class="m">+</span>弯钩</div>
<div class="t " style="left:948px;top:705px;"><span class="m">1730</span></div>
<div class="t " style="left:1010px;top:705px;"><span class="m">6</span></div>
<div class="hd" style="left:190px;top:730px;width:34px;height:29px;background:linear-gradient(90deg,#fff,#f1f0ea)"></div>
<div class="t " style="left:201px;top:738px;"><span class="m">2</span></div>
<div class="cell" style="left:224px;top:730px;width:72px;height:29px;"></div>
<div class="cell" style="left:296px;top:730px;width:57px;height:29px;"></div>
<div class="cell" style="left:353px;top:730px;width:36px;height:29px;"></div>
<div class="cell" style="left:389px;top:730px;width:33px;height:29px;"></div>
<div class="cell" style="left:422px;top:730px;width:201px;height:29px;"></div>
<div class="cell" style="left:623px;top:730px;width:166px;height:29px;"></div>
<div class="cell" style="left:789px;top:730px;width:156px;height:29px;"></div>
<div class="cell" style="left:945px;top:730px;width:61px;height:29px;"></div>
<div class="cell" style="left:1006px;top:730px;width:54px;height:29px;"></div>
<div class="t " style="left:226px;top:738px;">分布筋<span class="m">.1</span></div>
<div class="t " style="left:299px;top:738px;"><span class="m">6</span></div>
<div class="t " style="left:364px;top:738px;font-family:'Liberation Sans','Noto Sans CJK SC',sans-serif">中</div>
<div class="t " style="left:391px;top:738px;"><span class="m">1</span></div>
<div class="t " style="left:625px;top:738px;"><span class="m">318-125+200</span></div>
<div class="t " style="left:791px;top:738px;">净长<span class="m">-</span>起步<span class="m">+</span>搭接</div>
<div class="t " style="left:948px;top:738px;"><span class="m">393</span></div>
<div class="t " style="left:1010px;top:738px;"><span class="m">1</span></div>
<div class="hd" style="left:190px;top:759px;width:34px;height:29px;background:linear-gradient(90deg,#fff,#f1f0ea)"></div>
<div class="t " style="left:201px;top:767px;"><span class="m">3</span></div>
<div class="cell" style="left:224px;top:759px;width:72px;height:29px;"></div>
<div class="cell" style="left:296px;top:759px;width:57px;height:29px;"></div>
<div class="cell" style="left:353px;top:759px;width:36px;height:29px;"></div>
<div class="cell" style="left:389px;top:759px;width:33px;height:29px;"></div>
<div class="cell" style="left:422px;top:759px;width:201px;height:29px;"></div>
<div class="cell" style="left:623px;top:759px;width:166px;height:29px;"></div>
<div class="cell" style="left:789px;top:759px;width:156px;height:29px;"></div>
<div class="cell" style="left:945px;top:759px;width:61px;height:29px;"></div>
<div class="cell" style="left:1006px;top:759px;width:54px;height:29px;"></div>
<div class="t " style="left:226px;top:767px;">分布筋<span class="m">.2</span></div>
<div class="t " style="left:299px;top:767px;"><span class="m">6</span></div>
<div class="t " style="left:364px;top:767px;font-family:'Liberation Sans','Noto Sans CJK SC',sans-serif">中</div>
<div class="t " style="left:391px;top:767px;"><span class="m">1</span></div>
<div class="t " style="left:625px;top:767px;"><span class="m">353+200+200</span></div>
<div class="t " style="left:791px;top:767px;">净长<span class="m">+</span>搭接<span class="m">+</span>搭接</div>
<div class="t " style="left:948px;top:767px;"><span class="m">753</span></div>
<div class="t " style="left:1010px;top:767px;"><span class="m">1</span></div>
<div class="a" style="left:295.5px;top:693px;width:1.2px;height:87px;background:#000"></div>
<svg class="a" style="left:422px;top:692px;width:200px;height:88px" viewBox="422 691 200 88"><path d="M458.500 700V714.500H598V710.500H594" fill="none" stroke="#000" stroke-width="2"/><path d="M445 748.500H595" stroke="#000" stroke-width="2"/></svg>
<div class="t " style="left:441px;top:702px;"><span class="m">80</span></div>
<div class="t " style="left:509px;top:700px;"><span class="m">1600</span></div>
<div class="t " style="left:512px;top:736px;color:#a03020"><span class="m">393</span></div>
<div class="t " style="left:512px;top:765px;color:#a03020"><span class="m">753</span></div>
<svg class="a" style="left:0;top:0;width:1036px;height:780px;pointer-events:none" viewBox="0 0 1036 780"><g stroke="#e6200e" stroke-width="2.500" fill="none" stroke-linecap="round" stroke-linejoin="round"><path d="M88 207L322 453M322 439V453H308"/><path d="M363 633L567 28M554.500 34L567 28L573.500 40"/><path d="M243 660L269 739M255 732L269 739L274 725.500"/></g></svg>
<div class="a" style="left:27px;top:637px;height:30px;line-height:30px;font:21.500px/30px 'Liberation Serif','Noto Serif CJK SC',serif;color:#dc2412;-webkit-text-stroke:.3px #dc2412;white-space:nowrap;letter-spacing:2.340px">汇总后，编辑，</div>
<div class="a" style="left:193.500px;top:637px;height:30px;line-height:30px;font:21.500px/30px 'Liberation Serif','Noto Serif CJK SC',serif;color:#dc2412;-webkit-text-stroke:.3px #dc2412;white-space:nowrap;letter-spacing:2.680px">删除分布筋。锁定。</div>
</div>
</body></html>
